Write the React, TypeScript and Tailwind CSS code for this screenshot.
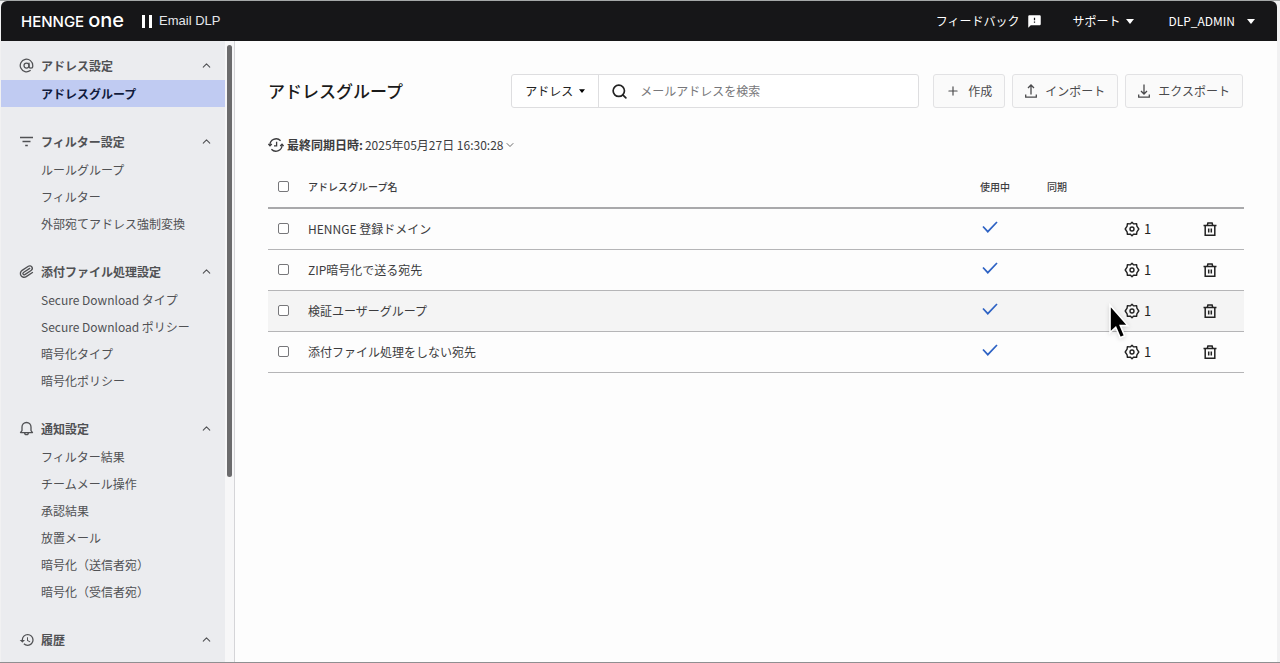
import React from "react";
import { AtSign, ChevronDown, ChevronUp, Paperclip, Plus, Search } from "lucide-react";
import { MdFeedback, MdHistory } from "react-icons/md";

type Section = {
  title: string;
  icon: React.ReactNode;
  items: string[];
};

const sections: Section[] = [
  {
    title: "アドレス設定",
    icon: <AtSign size={15} strokeWidth={2} />,
    items: ["アドレスグループ"],
  },
  {
    title: "フィルター設定",
    icon: <FilterIcon />,
    items: ["ルールグループ", "フィルター", "外部宛てアドレス強制変換"],
  },
  {
    title: "添付ファイル処理設定",
    icon: <Paperclip size={15} strokeWidth={2.2} className="rotate-12" />,
    items: [
      "Secure Download タイプ",
      "Secure Download ポリシー",
      "暗号化タイプ",
      "暗号化ポリシー",
    ],
  },
  {
    title: "通知設定",
    icon: <BellIcon />,
    items: [
      "フィルター結果",
      "チームメール操作",
      "承認結果",
      "放置メール",
      "暗号化（送信者宛）",
      "暗号化（受信者宛）",
    ],
  },
  { title: "履歴", icon: <MdHistory size={16} />, items: [] },
];

const groups = [
  { name: "HENNGE 登録ドメイン", rules: 1 },
  { name: "ZIP暗号化で送る宛先", rules: 1 },
  { name: "検証ユーザーグループ", rules: 1, hovered: true },
  { name: "添付ファイル処理をしない宛先", rules: 1 },
];

function FilterIcon() {
  return (
    <svg width="15" height="14" viewBox="0 0 15 14" fill="none" stroke="currentColor" strokeWidth="1.4">
      <path d="M1 2.5h13M3.5 6.5h8M6.2 10.5h2.6" />
    </svg>
  );
}

function BellIcon() {
  return (
    <svg width="15" height="15" viewBox="0 0 15 15" fill="none" stroke="currentColor" strokeWidth="1.3">
      <path
        d="M1.5 11.6h12L12 9.6V6a4.5 4.5 0 0 0-9 0v3.6l-1.5 2ZM5.6 11.8a1.9 1.9 0 0 0 3.8 0"
        strokeLinejoin="round"
      />
    </svg>
  );
}

function Caret({ className }: { className?: string }) {
  return (
    <svg viewBox="0 0 8 5" className={className} fill="currentColor" aria-hidden="true">
      <path d="M0 0h8L4 5z" />
    </svg>
  );
}

function GearIcon() {
  return (
    <svg width="16" height="16" viewBox="0 0 16 16" fill="none" stroke="currentColor" strokeWidth="1.4" strokeLinejoin="round">
      <path d="M8 1.2l1.7 1.7 2.9-.2.3 2.5L14.8 8l-1.9 2.8-.3 2.5-2.9-.2L8 14.8l-1.7-1.7-2.9.2-.3-2.5L1.2 8l1.9-2.8.3-2.5 2.9.2z" />
      <circle cx="8" cy="8" r="2" />
    </svg>
  );
}

function TrashIcon() {
  return (
    <svg width="14" height="14" viewBox="0 0 14 14" fill="none" stroke="currentColor" strokeWidth="1.5">
      <path d="M0.5 3.4h13M4.3 3.2l.6-2.2h4.2l.6 2.2M2.2 3.4v9.8h9.6V3.4M5.7 6.4v4M8.3 6.4v4" />
    </svg>
  );
}

function TransferIcon({ up }: { up?: boolean }) {
  return (
    <svg width="12" height="14" viewBox="0 0 12 14" fill="none" stroke="currentColor" strokeWidth="1.3">
      <path d="M0.7 10.5v2.6h10.6v-2.6" />
      <path d={up ? "M6 10.5V1M3 4l3-3 3 3" : "M6 0.5V10M3 7l3 3 3-3"} />
    </svg>
  );
}

function SyncClockIcon() {
  return (
    <svg width="16" height="16" viewBox="0 0 16 16" fill="none" stroke="currentColor" strokeWidth="1.3">
      <path d="M2 8.6A6.2 6.2 0 0 1 12.6 3.7M14 7.4A6.2 6.2 0 0 1 3.4 12.3" />
      <path d="M0.4 7l1.6 1.8L3.8 7M12.2 9L14 7.2 15.6 9M8.6 4.8v4H6" />
    </svg>
  );
}

function Header() {
  return (
    <header className="flex h-10 shrink-0 items-center rounded-t-md bg-[#161618] pr-[22px] pl-5 text-xs text-white">
      <a href="#" className="flex items-baseline gap-1 font-['Inter',sans-serif] leading-5">
        <span className="text-[15px] font-medium">HENNGE</span>
        <span className="text-xl leading-5 font-medium">one</span>
      </a>
      <span className="ml-[18px] flex gap-1">
        <i className="h-[13px] w-[3px] bg-white" />
        <i className="h-[13px] w-[3px] bg-white" />
      </span>
      <span className="ml-[7px] font-['Liberation_Sans',sans-serif] text-[13px] text-gray-200">Email DLP</span>
      <nav className="ml-auto flex items-center">
        <button className="flex items-center gap-2">
          フィードバック
          <MdFeedback size={15} />
        </button>
        <button className="ml-[30px] flex items-center gap-1.5">
          サポート
          <Caret className="h-[5px] w-2" />
        </button>
        <button className="ml-[34px] flex items-center gap-3">
          DLP_ADMIN
          <Caret className="h-[5px] w-2" />
        </button>
      </nav>
    </header>
  );
}

function Sidebar() {
  return (
    <aside className="flex w-[234px] shrink-0 border-r border-[#d5d5d8] bg-[#f7f7f8]">
      <nav className="flex-1 overflow-hidden bg-[#ebecef] pt-2.5 text-xs text-[#505154]">
        {sections.map((section, i) => (
          <div key={section.title} className="mb-5">
            <button className="flex h-[29px] w-full items-center pr-3 pl-[18px] font-bold">
              <span className="flex w-[22px] items-center">{section.icon}</span>
              {section.title}
              <ChevronUp size={13} className="ml-auto" />
            </button>
            <ul>
              {section.items.map((item, j) => (
                <li key={item}>
                  <a
                    href="#"
                    className={
                      i === 0 && j === 0
                        ? "block h-[27px] bg-[#c0cbf2] pl-10 leading-[27px] font-bold text-[#101a3c]"
                        : "block h-[27px] pl-10 leading-[27px]"
                    }
                  >
                    {item}
                  </a>
                </li>
              ))}
            </ul>
          </div>
        ))}
      </nav>
      <div className="w-[9px] pt-1 pl-0.5">
        <div className="h-[70%] w-[5px] rounded-full bg-[#6b6b6d]" />
      </div>
    </aside>
  );
}

function Toolbar() {
  const button =
    "flex h-[34px] items-center gap-2 rounded-[3px] border border-[#e2e2e4] bg-[#fafafa] px-3 text-[#4a4a4c]";

  return (
    <div className="flex items-center text-xs">
      <h1 className="flex-1 text-[17px] font-medium text-[#1a1a1a]">アドレスグループ</h1>
      <div className="flex h-[34px] w-[408px] rounded-[3px] border border-[#dedee0] bg-white">
        <div className="relative w-[87px] border-r border-[#dedee0]">
          <select aria-label="検索対象" className="h-full w-full appearance-none pl-[13px] text-[#222]">
            <option>アドレス</option>
          </select>
          <Caret className="pointer-events-none absolute top-3.5 right-[13px] h-1 w-1.5" />
        </div>
        <label className="flex flex-1 items-center gap-3 pl-3">
          <Search size={17} strokeWidth={2.4} className="shrink-0 text-[#222]" />
          <input
            type="search"
            aria-label="メールアドレスを検索"
            placeholder="メールアドレスを検索"
            className="w-full outline-none placeholder:text-[#77777a]"
          />
        </label>
      </div>
      <div className="ml-[14px] flex gap-[7px] pr-px">
        <button className={button}>
          <Plus size={14} strokeWidth={2} />
          作成
        </button>
        <button className={button}>
          <TransferIcon up />
          インポート
        </button>
        <button className={button}>
          <TransferIcon />
          エクスポート
        </button>
      </div>
    </div>
  );
}

const checkboxClass =
  "block size-[11px] appearance-none rounded-[2px] border border-[#77777a] bg-white checked:bg-[#2d62c4]";

function GroupTable() {
  return (
    <table className="mt-3 w-full table-fixed text-left text-xs text-[#3c3c3e]">
      <thead>
        <tr className="h-[42px] border-b-2 border-[#a9a9ab] text-[10px]">
          <th className="w-10 pl-2.5">
            <input type="checkbox" aria-label="すべて選択" className={checkboxClass} />
          </th>
          <th className="font-medium">アドレスグループ名</th>
          <th className="w-[67px] font-medium">使用中</th>
          <th className="w-[77px] font-medium">同期</th>
          <th className="w-[79px]" />
          <th className="w-[41px]" />
        </tr>
      </thead>
      <tbody>
        {groups.map((group) => (
          <tr
            key={group.name}
            className={
              group.hovered
                ? "h-[41px] border-b border-[#b5b5b7] bg-[#f4f4f4]"
                : "h-[41px] border-b border-[#b5b5b7]"
            }
          >
            <td className="pl-2.5">
              <input type="checkbox" aria-label={group.name} className={checkboxClass} />
            </td>
            <td>{group.name}</td>
            <td className="pb-1 pl-0.5">
              <svg width="16" height="12" viewBox="0 0 16 12" fill="none" stroke="#2d62c4" strokeWidth="1.7">
                <path d="M1 5.5L5.8 10.7 15 1" />
              </svg>
            </td>
            <td />
            <td>
              <button className="relative flex items-center gap-1 text-[13px] leading-4 text-[#222]">
                <GearIcon />
                {group.rules}
                {group.hovered && <Pointer />}
              </button>
            </td>
            <td>
              <button aria-label="削除" className="block text-[#222]">
                <TrashIcon />
              </button>
            </td>
          </tr>
        ))}
      </tbody>
    </table>
  );
}

function Pointer() {
  return (
    <svg
      width="22"
      height="38"
      viewBox="0 0 20 36"
      className="pointer-events-none absolute top-0 -left-4 drop-shadow-sm"
      aria-hidden="true"
    >
      <path
        d="M1.5 2v26l5.4-5 4.2 9.8 4.2-1.8-4.1-9.6h7.2z"
        fill="#000"
        stroke="#fff"
        strokeWidth="1.5"
      />
    </svg>
  );
}

const App = () => {
  return (
    <div className="flex h-screen flex-col border-t border-b border-t-[#a5a8a8] border-b-[#8f8f91] bg-[#f1f1f2] pr-[3px] pl-px font-['Noto_Sans_CJK_JP',sans-serif]">
      <Header />
      <div className="flex min-h-0 flex-1">
        <Sidebar />
        <main className="min-w-0 flex-1 bg-[#fdfdfd] px-[33px] pt-[33px]">
          <Toolbar />
          <button className="mt-7 flex h-[18px] items-center text-xs text-[#3c3c3e]">
            <SyncClockIcon />
            <b className="mr-0.5 ml-[3px]">最終同期日時:</b>
            2025年05月27日 16:30:28
            <ChevronDown size={12} strokeWidth={1.5} />
          </button>
          <GroupTable />
        </main>
      </div>
    </div>
  );
};

export default App;
